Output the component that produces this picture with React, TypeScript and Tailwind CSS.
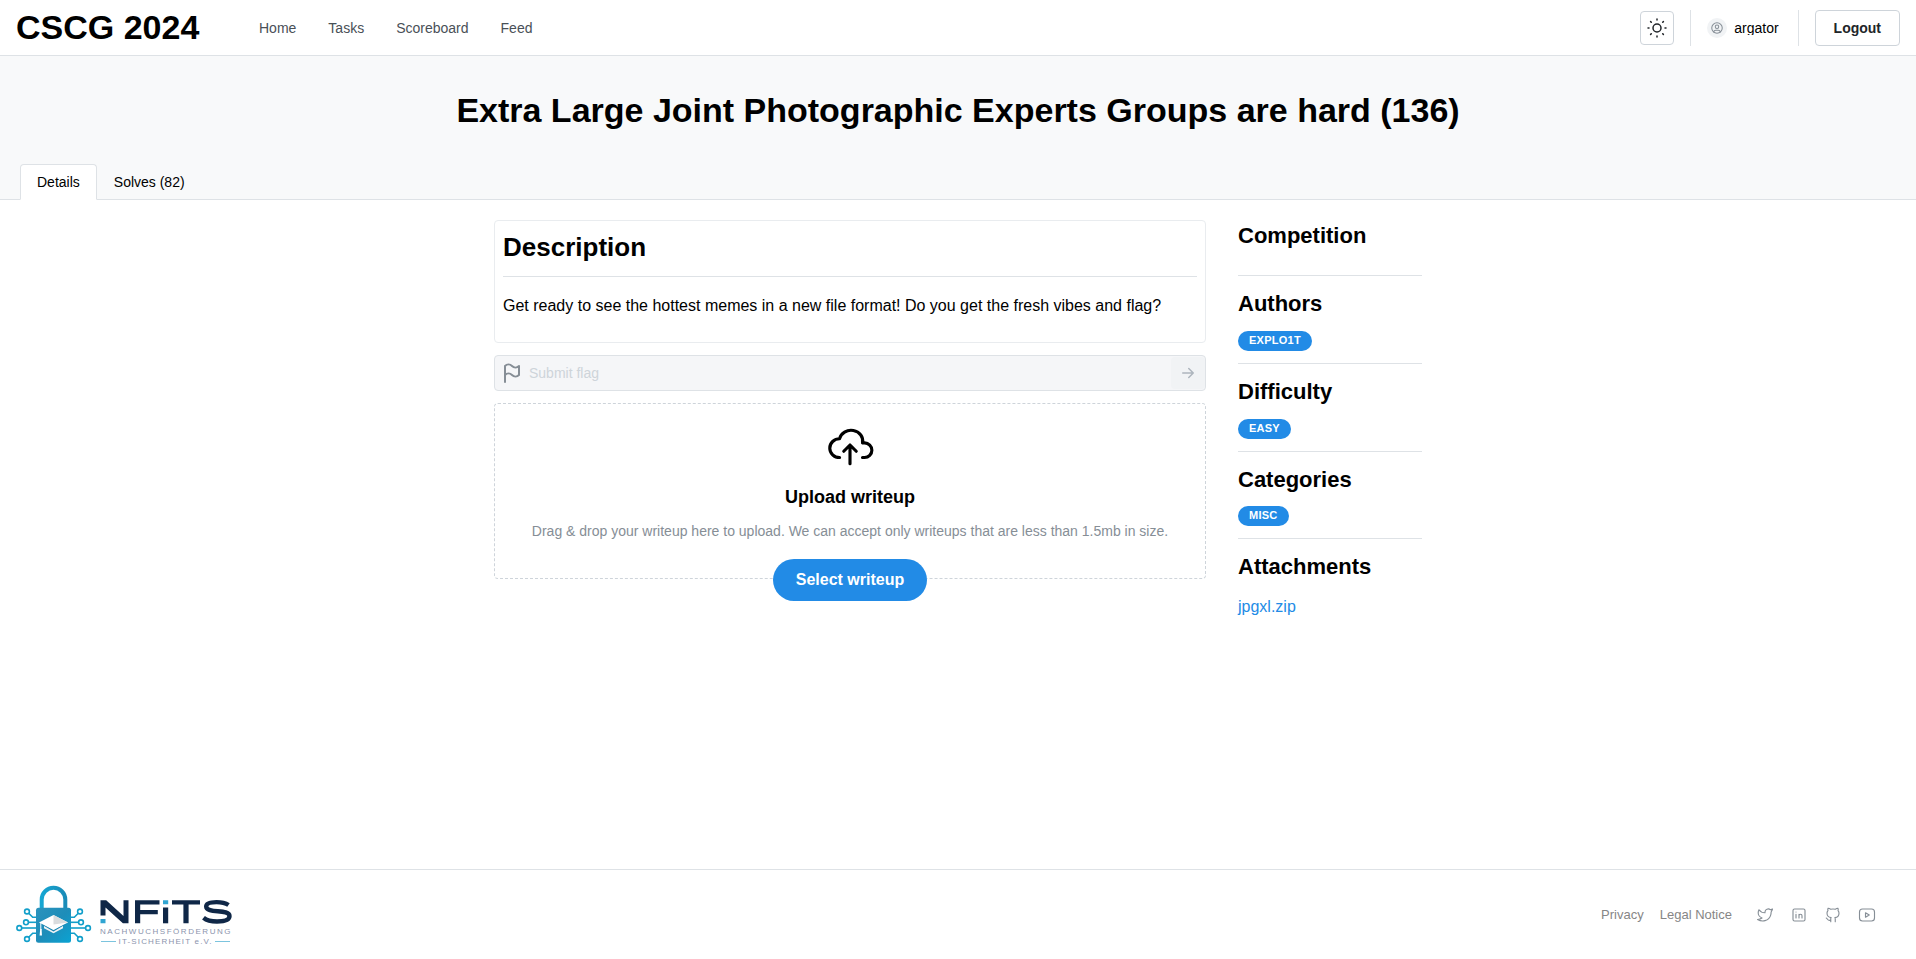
import type { ReactNode } from "react";

type IconProps = { size: number; stroke?: number; className?: string; children: ReactNode };

function Icon({ size, stroke = 1.5, className = "", children }: IconProps) {
  return (
    <svg
      width={size}
      height={size}
      viewBox="0 0 24 24"
      fill="none"
      stroke="currentColor"
      strokeWidth={stroke}
      strokeLinecap="round"
      strokeLinejoin="round"
      className={`block shrink-0 ${className}`}
    >
      {children}
    </svg>
  );
}

const navLinks = ["Home", "Tasks", "Scoreboard", "Feed"];

const sections = [
  { title: "Authors", badge: "explo1t" },
  { title: "Difficulty", badge: "easy" },
  { title: "Categories", badge: "misc" },
];

function Header() {
  return (
    <header className="flex h-14 items-center justify-between border-b border-[#dee2e6] bg-white px-4">
      <div className="flex items-center">
        <h1 className="w-[243px] pb-0.5 text-[34px] leading-[44px] font-bold">CSCG 2024</h1>
        <nav className="flex gap-8 text-sm text-[#495057]">
          {navLinks.map((l) => (
            <a key={l} href="#">{l}</a>
          ))}
        </nav>
      </div>
      <div className="flex items-center gap-4">
        <button className="flex size-[34px] items-center justify-center rounded border border-[#ced4da] text-[#212529]">
          <Icon size={24} className="-m-px">
            <circle cx="12" cy="12" r="4" />
            <path d="M3 12h1m8 -9v1m8 8h1m-9 8v1m-6.4 -15.4l.7 .7m12.1 -.7l-.7 .7m0 11.4l.7 .7m-12.1 -.7l-.7 .7" />
          </Icon>
        </button>
        <div className="h-9 w-px bg-[#dee2e6]" />
        <div className="flex items-center gap-[7px] pr-[3px]">
          <div className="flex size-5 items-center justify-center rounded-full bg-[#f1f3f5] text-[#868e96]">
            <Icon size={14} stroke={1.75}>
              <circle cx="12" cy="12" r="9" />
              <circle cx="12" cy="10" r="3" />
              <path d="M6.168 18.849a4 4 0 0 1 3.832 -2.849h4a4 4 0 0 1 3.834 2.855" />
            </Icon>
          </div>
          <span className="overflow-hidden text-sm leading-[14px]">argator</span>
        </div>
        <div className="h-9 w-px bg-[#dee2e6]" />
        <button className="h-9 rounded border border-[#ced4da] px-[18px] text-sm font-bold text-[#212529]">Logout</button>
      </div>
    </header>
  );
}

function Logo() {
  return (
    <svg width="216" height="62" viewBox="0 0 216 62" className="mt-0.5 block">
      <defs>
        <linearGradient id="body" x1="0" y1="0" x2="1" y2="1">
          <stop offset="0" stopColor="#2b93bd" />
          <stop offset="0.5" stopColor="#1e8db9" />
          <stop offset="1" stopColor="#0aa3d3" />
        </linearGradient>
        <linearGradient id="shackle" x1="0" y1="0" x2="1" y2="0">
          <stop offset="0" stopColor="#16a6d2" />
          <stop offset="1" stopColor="#1a8cb8" />
        </linearGradient>
      </defs>
      <path d="M25.7 24V14.6a11.8 11.8 0 0 1 23.6 0V24" fill="none" stroke="url(#shackle)" strokeWidth="4" />
      <g fill="none" stroke="#129fca" strokeWidth="1.6">
        <circle cx="11" cy="26.5" r="2.4" />
        <path d="M12.7 28.2l4 4H21" />
        <circle cx="10" cy="37.3" r="2.4" />
        <path d="M12.4 37.3H21" />
        <circle cx="3.3" cy="43" r="2.4" />
        <path d="M5.7 43H21" />
        <circle cx="11" cy="54" r="2.4" />
        <path d="M12.7 52.3l4-4H21" />
        <circle cx="64" cy="26.5" r="2.4" />
        <path d="M62.3 28.2l-4 4H54" />
        <circle cx="65" cy="37.3" r="2.4" />
        <path d="M62.6 37.3H54" />
        <circle cx="72" cy="43" r="2.4" />
        <path d="M69.6 43H54" />
        <circle cx="64" cy="54" r="2.4" />
        <path d="M62.3 52.3l-4-4H54" />
      </g>
      <rect x="20" y="22.7" width="35" height="35" rx="2.5" fill="url(#body)" />
      <path d="M28 40v3.300l9.500 4.900 9.500-4.900V40" fill="#eef2f4" />
      <path d="M25 38.500l12.500 7.300L50 38.500" fill="none" stroke="#1b86b3" strokeWidth="1.200" />
      <path d="M37.500 30L52 37.500 37.500 44.800 23 37.500z" fill="#ffffff" />
      <path d="M37.500 30L52 37.500 37.500 39.500z" fill="#d9dcde" />
      <path d="M24.800 38V45" stroke="#fff" strokeWidth="1" />
      <path d="M24.200 44h1.400l.4 6.500h-2.400z" fill="#fff" />
      <g fill="#0f2747">
        <path d="M84.500 15.300h5.700L107.500 31V15.300h5v23h-5.600L89.500 22.500V30.500h-5z" />
        <path d="M119 15.300h24.500v4.200H124.200v5.500h17.600v4.200h-17.600v9.100H119z" />
        <path d="M147 22.500h5.200v15.800H147z" />
        <path d="M156 15.300h28v4.200h-11.400v18.800h-5.200V19.500H156z" />
      </g>
      <path d="M212.500 20c-3-2-7-2.900-12-2.900-7 0-10.300 1.500-10.300 4.300 0 7.600 23.300 2 23.300 9.700 0 4-5 5.400-12.500 5.400-6 0-10.500-1.300-13.500-3.800" fill="none" stroke="#0f2747" strokeWidth="4.400" />
      <path d="M84.500 34h5v4.300h-5zM147 15.300h5.200v4H147z" fill="#30a5d2" />
      <text x="84" y="49" textLength="130.500" fontFamily="Liberation Sans, sans-serif" fontSize="8" fill="#8c94ad">NACHWUCHSFÖRDERUNG</text>
      <text x="102.500" y="58.800" textLength="93" fontFamily="Liberation Sans, sans-serif" fontSize="8" fill="#8c94ad">IT-SICHERHEIT e.V.</text>
      <path d="M85 56.500h15M199 56.500h15" stroke="#7cc4de" strokeWidth="1" />
    </svg>
  );
}

function Footer() {
  return (
    <footer className="flex h-[90px] items-center justify-between border-t border-[#dee2e6] pr-8 pl-4">
      <Logo />
      <div className="flex items-center text-[13px] text-[#868686]">
        <a href="#" className="mr-4">Privacy</a>
        <a href="#" className="mr-4">Legal Notice</a>
        <div className="flex text-[#868e96]">
          <a href="#" className="flex size-[34px] items-center justify-center">
            <Icon size={18}>
              <path d="M22 4.010c-1 .490 -1.980 .689 -3 .990c-1.121 -1.265 -2.783 -1.335 -4.380 -.737s-2.643 2.060 -2.620 3.737v1c-3.245 .083 -6.135 -1.395 -8 -4c0 0 -4.182 7.433 4 11c-1.872 1.247 -3.739 2.088 -6 2c3.308 1.803 6.913 2.423 10.034 1.517c3.580 -1.040 6.522 -3.723 7.651 -7.742a13.840 13.840 0 0 0 .497 -3.753c0 -.249 1.510 -2.772 1.818 -4.013z" />
            </Icon>
          </a>
          <a href="#" className="flex size-[34px] items-center justify-center">
            <Icon size={18}>
              <rect x="4" y="4" width="16" height="16" rx="2" />
              <path d="M8 11v5M8 8v.01M12 16v-5M16 16v-3a2 2 0 0 0 -4 0" />
            </Icon>
          </a>
          <a href="#" className="flex size-[34px] items-center justify-center">
            <Icon size={18}>
              <path d="M9 19c-4.300 1.400 -4.300 -2.500 -6 -3m12 5v-3.500c0 -1 .1 -1.400 -.5 -2c2.800 -.3 5.500 -1.400 5.500 -6a4.600 4.600 0 0 0 -1.300 -3.200a4.200 4.200 0 0 0 -.1 -3.200s-1.100 -.3 -3.500 1.300a12.300 12.300 0 0 0 -6.200 0c-2.400 -1.600 -3.500 -1.300 -3.500 -1.300a4.200 4.200 0 0 0 -.1 3.200a4.600 4.600 0 0 0 -1.300 3.200c0 4.600 2.700 5.700 5.500 6c-.6 .6 -.6 1.200 -.5 2v3.500" />
            </Icon>
          </a>
          <a href="#" className="flex size-[34px] items-center justify-center">
            <Icon size={18}>
              <rect x="2" y="4" width="20" height="16" rx="4" />
              <path d="M10 9l5 3l-5 3z" />
            </Icon>
          </a>
        </div>
      </div>
    </footer>
  );
}

export default function App() {
  return (
    <div className="flex h-[959px] flex-col bg-white font-['Liberation_Sans',sans-serif] text-black">
      <Header />
      <section className="flex h-36 flex-col justify-between border-b border-[#dee2e6] bg-[#f8f9fa]">
        <h1 className="pt-[31px] text-center text-[34px] leading-[46px] font-bold">
          Extra Large Joint Photographic Experts Groups are hard (136)
        </h1>
        <div className="-mb-px flex pl-5 text-sm leading-[14px]">
          <button className="rounded-t border border-b-white border-[#dee2e6] bg-white px-4 py-2.5">Details</button>
          <button className="border border-transparent px-4 py-2.5">Solves (82)</button>
        </div>
      </section>
      <main className="mx-auto flex w-[928px] grow gap-8 pt-5">
        <div className="w-[712px]">
          <div className="h-[123px] rounded border border-[#e9ecef] px-2 pt-[9px]">
            <h2 className="text-[26px] leading-[35px] font-bold">Description</h2>
            <div className="mt-[11px] border-t border-[#dee2e6] pt-4 text-base leading-[25px]">
              Get ready to see the hottest memes in a new file format! Do you get the fresh vibes and flag?
            </div>
          </div>
          <div className="mt-3 flex h-9 items-center rounded border border-[#dee2e6] bg-[#f5f6f8] pl-[5px]">
            <Icon size={24} stroke={2} className="text-[#868e96]">
              <path d="M5 5a5 5 0 0 1 7 0a5 5 0 0 0 7 0v9a5 5 0 0 1 -7 0a5 5 0 0 0 -7 0v-9z" />
              <path d="M5 21v-7" />
            </Icon>
            <span className="grow pl-[5px] text-sm text-[#ced4da]">Submit flag</span>
            <button className="flex h-8 w-[34px] items-center justify-center rounded bg-[#f1f3f5] text-[#adb5bd]">
              <Icon size={18} stroke={2}>
                <path d="M5 12h14M13 18l6 -6M13 6l6 6" />
              </Icon>
            </button>
          </div>
          <div className="relative mt-3 flex h-44 flex-col items-center rounded border border-dashed border-[#ced4da] pt-4">
            <Icon size={50}>
              <path d="M7 18a4.600 4.400 0 0 1 0 -9a5 4.500 0 0 1 11 2h1a3.500 3.500 0 0 1 0 7h-1" />
              <path d="M9 15l3 -3l3 3M12 12v9" />
            </Icon>
            <div className="mt-[13px] text-lg leading-7 font-bold">Upload writeup</div>
            <div className="mt-[9px] text-sm leading-[22px] text-[#868e96]">
              Drag &amp; drop your writeup here to upload. We can accept only writeups that are less than 1.5mb in size.
            </div>
            <button className="absolute -bottom-[23px] h-[42px] w-[154px] rounded-full bg-[#228be6] text-base font-bold text-white">
              Select writeup
            </button>
          </div>
        </div>
        <aside className="w-[184px]">
          <h3 className="h-[55.3px] pt-px text-[22px] leading-[29.7px] font-bold">Competition</h3>
          {sections.map((s) => (
            <div key={s.title} className="flex flex-col items-start border-t border-[#dee2e6] pt-[13px] pb-3">
              <h3 className="mb-3 text-[22px] leading-[29.7px] font-bold">{s.title}</h3>
              <span className="h-5 rounded-full bg-[#228be6] px-[11px] text-[11px] leading-[18.4px] font-bold tracking-[0.25px] text-white uppercase">
                {s.badge}
              </span>
            </div>
          ))}
          <div className="border-t border-[#dee2e6] pt-[13px]">
            <h3 className="mb-3 text-[22px] leading-[29.7px] font-bold">Attachments</h3>
            <a href="#" className="block text-base leading-[25px] text-[#228be6]">jpgxl.zip</a>
          </div>
        </aside>
      </main>
      <Footer />
    </div>
  );
}
